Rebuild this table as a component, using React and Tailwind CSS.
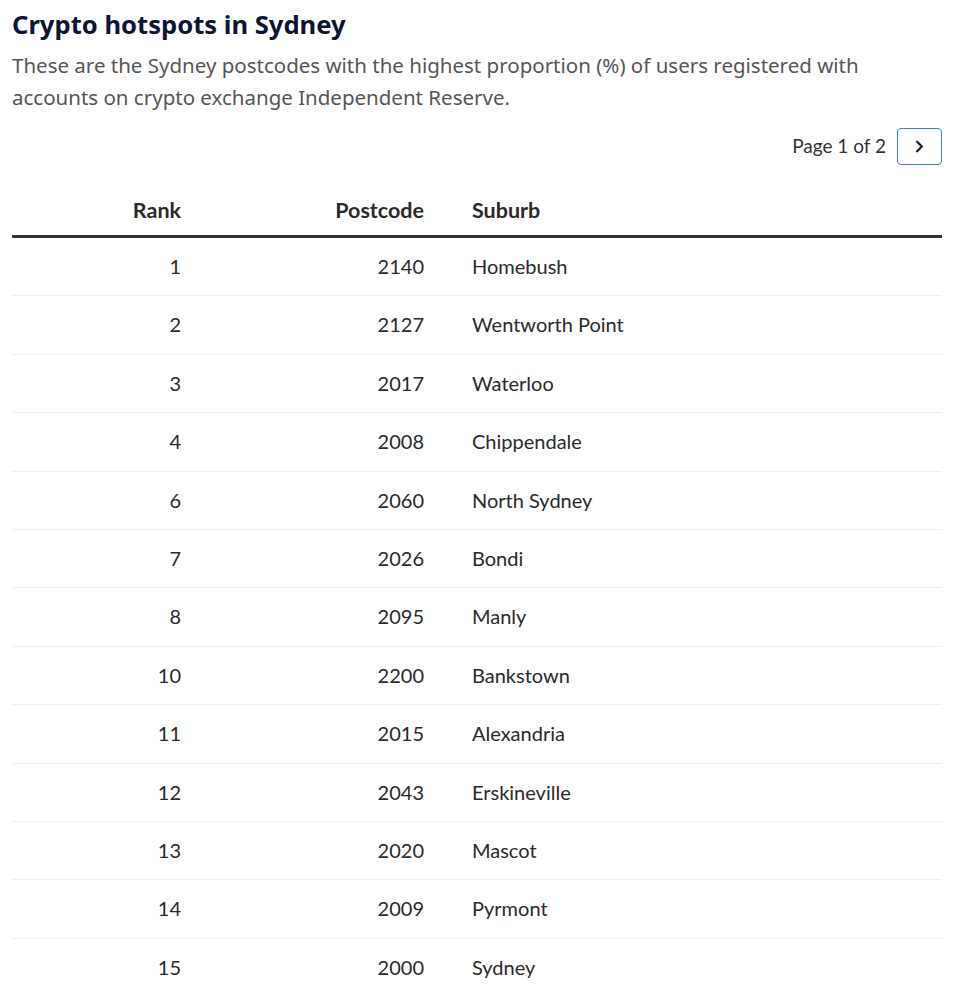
import React from 'react'
import { ChevronRight } from 'lucide-react'

const rows = [
  [1, 2140, 'Homebush'],
  [2, 2127, 'Wentworth Point'],
  [3, 2017, 'Waterloo'],
  [4, 2008, 'Chippendale'],
  [6, 2060, 'North Sydney'],
  [7, 2026, 'Bondi'],
  [8, 2095, 'Manly'],
  [10, 2200, 'Bankstown'],
  [11, 2015, 'Alexandria'],
  [12, 2043, 'Erskineville'],
  [13, 2020, 'Mascot'],
  [14, 2009, 'Pyrmont'],
  [15, 2000, 'Sydney'],
]

export default function App() {
  return (
    <div className="bg-white px-3 pt-2 pr-[15px] min-h-screen">
      <h1 className="text-[25.6px] leading-[34px] font-bold text-[#0b1533] font-['Noto_Sans',sans-serif]">
        Crypto hotspots in Sydney
      </h1>
      <p className="mt-[7px] text-[20.5px] leading-[32px] text-[#555555] font-['Noto_Sans',sans-serif]">
        These are the Sydney postcodes with the highest proportion (%) of users registered with accounts on crypto exchange Independent Reserve.
      </p>

      <div className="mt-[15px] flex items-center justify-end gap-[11px] font-['Lato',sans-serif]">
        <span className="text-[19px] text-[#333333]">Page 1 of 2</span>
        <button className="w-[45px] h-[37px] flex items-center justify-center border border-[#3b7fd4] rounded-[4px] bg-white">
          <ChevronRight size={19} strokeWidth={3} color="#222222" />
        </button>
      </div>

      <table className="mt-3 w-full border-collapse text-[20px] text-[#2a2a2a] font-['Lato',sans-serif]">
        <thead>
          <tr className="border-b-[3px] border-[#333333]">
            <th className="w-[193px] pr-6 pt-5 pb-3 leading-[26px] text-[21.5px] text-right font-bold">Rank</th>
            <th className="w-[243px] pr-6 pt-5 pb-3 leading-[26px] text-[21.5px] text-right font-bold">Postcode</th>
            <th className="pl-6 pt-5 pb-3 leading-[26px] text-[21.5px] text-left font-bold">Suburb</th>
          </tr>
        </thead>
        <tbody>
          {rows.map(([rank, code, suburb]) => (
            <tr key={rank} className="border-b border-[#eeeeee]">
              <td className="pr-6 py-4 leading-[25.4px] text-right">{rank}</td>
              <td className="pr-6 py-4 leading-[25.4px] text-right">{code}</td>
              <td className="pl-6 py-4 leading-[25.4px] text-left">{suburb}</td>
            </tr>
          ))}
        </tbody>
      </table>
    </div>
  )
}
